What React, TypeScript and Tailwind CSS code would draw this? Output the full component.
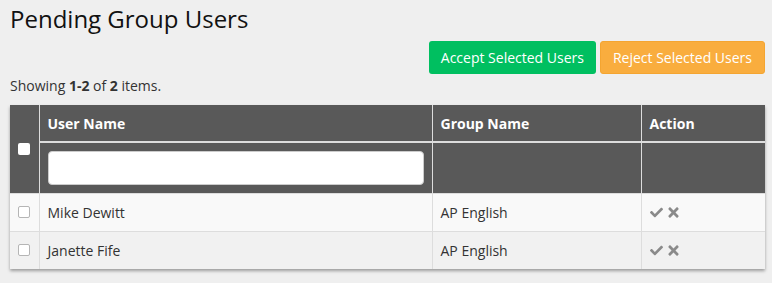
import { FaCheck, FaTimes } from 'react-icons/fa';

const users = [
  { id: 1, name: 'Mike Dewitt', group: 'AP English' },
  { id: 2, name: 'Janette Fife', group: 'AP English' },
];

function Box({ dark }: { dark?: boolean }) {
  return (
    <input
      type="checkbox"
      className={
        dark
          ? 'block h-3 w-3 appearance-none rounded-[2px] bg-white'
          : 'block h-3 w-3 appearance-none rounded-[2px] border border-[#b5b5b5] bg-white'
      }
    />
  );
}

export default function App() {
  return (
    <div className="h-[283px] w-[772px] overflow-hidden bg-[#efefef] pl-[10px] pr-[7px] pt-[4px] font-['Open_Sans',sans-serif] text-[#333]">
      <h1 className="text-[24px] leading-[29px] text-[#111]">Pending Group Users</h1>
      <div className="mt-[8px] flex justify-end gap-[4px]">
        <button className="h-[33px] rounded-[3px] bg-[#00bf60] px-[12px] text-[14px] font-medium text-white">
          Accept Selected Users
        </button>
        <button className="h-[33px] rounded-[3px] border border-[#f4a531] bg-[#f9ad3e] px-[12px] text-[14px] font-medium text-white">
          Reject Selected Users
        </button>
      </div>
      <p className="mt-[2px] text-[14px] leading-[20px]">
        Showing <b>1-2</b> of <b>2</b> items.
      </p>
      <table className="mt-[9px] w-[755px] table-fixed border-collapse text-[14px] shadow-[0_2px_3px_rgba(0,0,0,0.35)]">
        <colgroup>
          <col className="w-[29px]" />
          <col className="w-[393px]" />
          <col className="w-[209px]" />
          <col />
        </colgroup>
        <thead className="bg-[#595959] text-left font-bold text-white">
          <tr className="h-[37px]">
            <th rowSpan={2} className="border-r border-[#ddd] pl-[8px]">
              <Box dark />
            </th>
            <th className="border-b-2 border-r border-[#ddd] px-[8px]">User Name</th>
            <th className="border-b-2 border-r border-[#ddd] px-[8px]">Group Name</th>
            <th className="border-b-2 border-[#ddd] px-[8px]">Action</th>
          </tr>
          <tr className="h-[51px]">
            <td className="border-r border-[#ddd] px-[8px]">
              <input type="text" className="block h-[34px] w-full rounded-[4px] border border-[#ccc] bg-white" />
            </td>
            <td className="border-r border-[#ddd]" />
            <td />
          </tr>
        </thead>
        <tbody>
          {users.map((u, i) => (
            <tr key={u.id} className={i % 2 === 0 ? 'h-[38px] border-t border-[#ddd] bg-[#f9f9f9]' : 'h-[38px] border-t border-[#ddd] bg-[#f1f1f1]'}>
              <td className="border-r border-[#ddd] pl-[8px]">
                <Box />
              </td>
              <td className="border-r border-[#ddd] px-[8px]">{u.name}</td>
              <td className="border-r border-[#ddd] px-[8px]">{u.group}</td>
              <td className="px-[8px]">
                <span className="flex items-center gap-[4px] text-[#8a8a8a]">
                  <FaCheck className="h-[13px] w-[13px]" />
                  <FaTimes className="h-[15px] w-[13px]" />
                </span>
              </td>
            </tr>
          ))}
        </tbody>
      </table>
    </div>
  );
}
